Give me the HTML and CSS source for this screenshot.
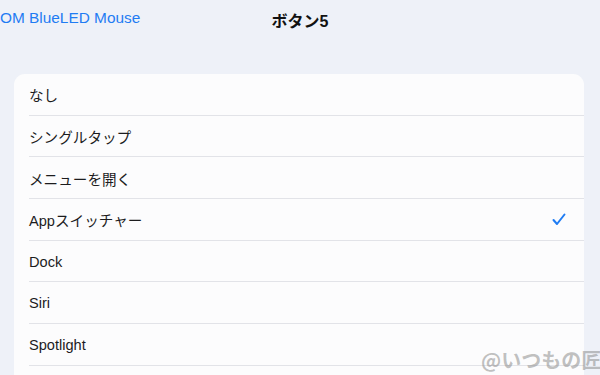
FILE: index.html
```html
<!DOCTYPE html>
<html lang="ja">
<head>
<meta charset="utf-8">
<link rel="stylesheet" href="styles.css">
</head>
<body>
<div class="screen">
  <header class="nav">
    <span class="back">OM BlueLED Mouse</span>
    <span class="title">ボタン5</span>
  </header>
  <ul class="list">
    <li class="row"><span>なし</span></li>
    <li class="row"><span>シングルタップ</span></li>
    <li class="row"><span>メニューを開く</span></li>
    <li class="row"><span>Appスイッチャー</span>
      <svg class="check" width="14" height="13" viewBox="0 0 14 13"><path d="M1.5 7 L5 11 L12.5 1.5" fill="none" stroke="#1f7cf3" stroke-width="2" stroke-linecap="round" stroke-linejoin="round"/></svg>
    </li>
    <li class="row"><span>Dock</span></li>
    <li class="row"><span>Siri</span></li>
    <li class="row"><span>Spotlight</span></li>
    <li class="row"><span>&nbsp;</span></li>
  </ul>
  <div class="watermark">@いつもの匠</div>
</div>
</body>
</html>
```
FILE: styles.css
```css
html, body {
  margin: 0;
  padding: 0;
}
body {
  width: 600px;
  height: 375px;
  overflow: hidden;
  background: #eef1f8;
  font-family: "Liberation Sans", "Noto Sans CJK JP", sans-serif;
  color: #1c1c1e;
}
.screen {
  position: relative;
  width: 600px;
  height: 375px;
  overflow: hidden;
}
.nav {
  position: relative;
  height: 35px;
  display: flex;
  align-items: center;
}
.back {
  color: #1f7cf3;
  font-size: 15.4px;
}
.title {
  position: absolute;
  left: 0;
  right: 0;
  text-align: center;
  font-size: 16px;
  font-weight: bold;
  color: #111;
  top: 8px;
}
.list {
  list-style: none;
  margin: 39px 16px 0 14px;
  padding: 0;
  background: #fcfcfd;
  border-radius: 11px;
}
.row {
  height: 41.7px;
  box-sizing: border-box;
  margin-left: 15px;
  padding-right: 18px;
  padding-top: 1px;
  display: flex;
  align-items: center;
  justify-content: space-between;
  font-size: 14.6px;
  border-bottom: 1px solid #e2e3e8;
}
.check {
  display: block;
}
.watermark {
  position: absolute;
  left: 481px;
  top: 345px;
  font-size: 20px;
  font-weight: bold;
  color: rgba(140, 140, 140, 0.55);
  white-space: nowrap;
  font-family: "Noto Sans CJK JP", sans-serif;
}
```
